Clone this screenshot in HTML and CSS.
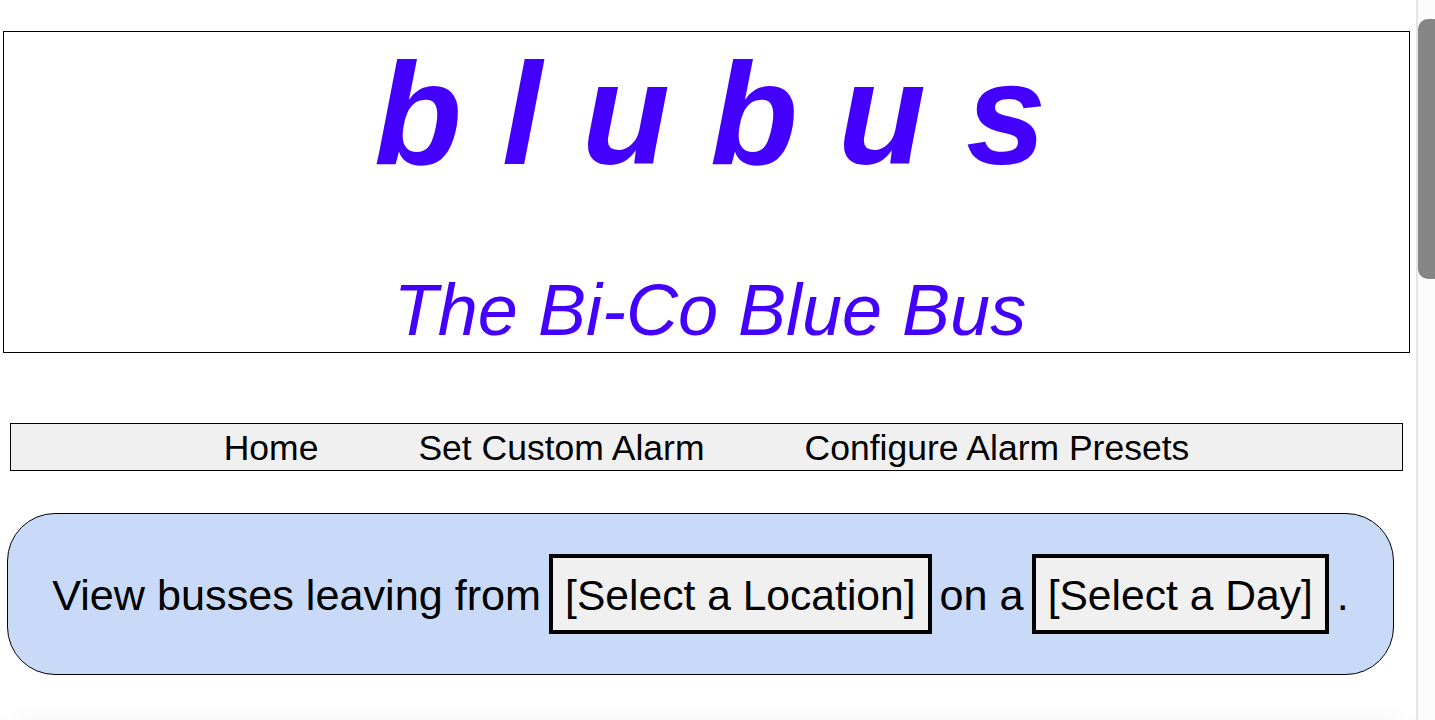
FILE: index.html
```html
<!DOCTYPE html>
<html lang="en">
<head>
<meta charset="utf-8">
<title>blubus</title>
<link rel="stylesheet" href="styles.css">
</head>
<body>
<div class="page">
  <header class="masthead">
    <h1 class="title">b l u b u s</h1>
    <p class="tagline">The Bi-Co Blue Bus</p>
  </header>
  <nav class="menu">
    <a class="menu-link" href="#">Home</a>
    <a class="menu-link" href="#">Set Custom Alarm</a>
    <a class="menu-link" href="#">Configure Alarm Presets</a>
  </nav>
  <section class="query">
    <span class="query-text">View busses leaving from</span>
    <button class="picker" type="button">[Select a Location]</button>
    <span class="query-text">on a</span>
    <button class="picker" type="button">[Select a Day]</button>
    <span class="query-text">.</span>
  </section>
  <section class="results"></section>
</div>
<div class="scrollbar"><div class="scrollbar-thumb"></div></div>
</body>
</html>
```
FILE: styles.css
```css
html, body {
  margin: 0;
  padding: 0;
  overflow: hidden;
  background: #ffffff;
}

body {
  font-family: "Liberation Sans", Arial, sans-serif;
  color: #000;
}

.page {
  width: 1416px;
  padding-top: 31px;
  box-sizing: border-box;
}

.masthead {
  margin-left: 3px;
  width: 1407px;
  height: 322px;
  box-sizing: border-box;
  border: 1px solid #000;
  padding-left: 7px;
  text-align: center;
  color: #4400ff;
}

.title {
  margin: 0;
  font-size: 144px;
  font-weight: bold;
  font-style: italic;
  line-height: 165px;
}

.tagline {
  margin: 72px 0 0;
  font-size: 72px;
  font-style: italic;
  line-height: 83px;
}

.menu {
  margin: 70px 0 0 10px;
  width: 1393px;
  height: 48px;
  box-sizing: border-box;
  border: 1px solid #000;
  background: #f0f0f0;
  display: flex;
  justify-content: center;
  gap: 100px;
  padding-top: 4px;
  font-size: 35.5px;
  line-height: 40px;
}

.menu-link {
  color: #000;
  text-decoration: none;
}

.query {
  margin: 42px 0 0 7px;
  width: 1387px;
  height: 162px;
  box-sizing: border-box;
  border: 1px solid #000;
  border-radius: 48px;
  background: #c9daf8;
  display: flex;
  justify-content: center;
  align-items: baseline;
  gap: 8px;
  padding-top: 40px;
  font-size: 43.2px;
  line-height: 49px;
}

.picker {
  font-family: inherit;
  font-size: 42.6px;
  color: #000;
  background: #f0f0f0;
  border: 4px solid #000;
  border-radius: 0;
  padding: 13px 12px 10px;
  line-height: 49px;
  margin: 0;
}

.results {
  margin: 46px 0 0 6px;
  width: 1404px;
  height: 300px;
  border-radius: 24px;
  box-shadow: 0 -2px 22px rgba(0, 0, 0, 0.05);
}

.scrollbar {
  position: fixed;
  top: 0;
  right: 0;
  width: 19px;
  height: 100%;
  box-sizing: border-box;
  background: #fcfcfc;
  border-left: 2px solid #e4e4e4;
}

.scrollbar-thumb {
  position: absolute;
  top: 19px;
  left: 0;
  width: 26px;
  height: 260px;
  border-radius: 10px;
  background: #858585;
}
```
